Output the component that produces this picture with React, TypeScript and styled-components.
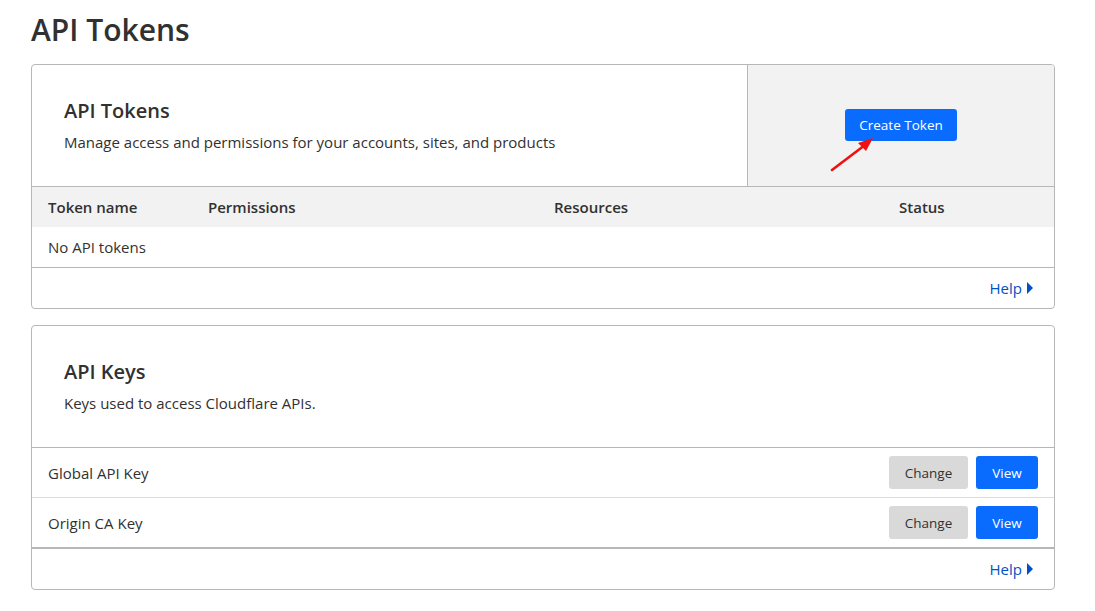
import styled, { createGlobalStyle } from "styled-components"

const GlobalStyle = createGlobalStyle`
  body {
    margin: 0;
    background: #ffffff;
    font-family: "Segoe UI", "Open Sans", "Noto Sans", sans-serif;
    color: #313131;
  }
`

function HelpLink() {
  return (
    <HelpAnchor href="#">
      Help
      <svg width="8" height="14" viewBox="0 0 8 14">
        <path d="M1 1 L7 7 L1 13 Z" fill="#0051c3" />
      </svg>
    </HelpAnchor>
  )
}

function App() {
  return (
    <Page>
      <GlobalStyle />
      <PageTitle>API Tokens</PageTitle>

      <Card>
        <CardTop>
          <Intro>
            <CardHeading>API Tokens</CardHeading>
            <CardText>Manage access and permissions for your accounts, sites, and products</CardText>
          </Intro>
          <ActionPane>
            <PrimaryButton $wide>Create Token</PrimaryButton>
            <Annotation width="50" height="42" viewBox="0 0 50 42">
              <line x1="3" y1="37" x2="36" y2="12" stroke="#f01010" strokeWidth="2.6" strokeLinecap="round" />
              <path d="M44 5 L29 10 L37 18 Z" fill="#f01010" />
            </Annotation>
          </ActionPane>
        </CardTop>
        <TableHead>
          <span>Token name</span>
          <span>Permissions</span>
          <span>Resources</span>
          <span>Status</span>
        </TableHead>
        <EmptyRow>No API tokens</EmptyRow>
        <CardFooter>
          <HelpLink />
        </CardFooter>
      </Card>

      <Card>
        <CardTop>
          <Intro>
            <CardHeading>API Keys</CardHeading>
            <CardText>Keys used to access Cloudflare APIs.</CardText>
          </Intro>
        </CardTop>
        <KeyRow>
          <span>Global API Key</span>
          <ButtonGroup>
            <SecondaryButton>Change</SecondaryButton>
            <PrimaryButton>View</PrimaryButton>
          </ButtonGroup>
        </KeyRow>
        <KeyRow $last>
          <span>Origin CA Key</span>
          <ButtonGroup>
            <SecondaryButton>Change</SecondaryButton>
            <PrimaryButton>View</PrimaryButton>
          </ButtonGroup>
        </KeyRow>
        <CardFooter>
          <HelpLink />
        </CardFooter>
      </Card>
    </Page>
  )
}

const Page = styled.main`
  width: 1024px;
  padding: 10px 0 20px 31px;
  display: flex;
  flex-direction: column;
  gap: 16px;
`

const PageTitle = styled.h1`
  font-size: 30px;
  font-weight: 600;
  line-height: 40px;
  margin: 0 0 -2px;
  color: #313131;
`

const Card = styled.section`
  border: 1px solid #b7b7b7;
  border-radius: 4px;
  overflow: hidden;
`

const CardTop = styled.div`
  display: flex;
  min-height: 121px;
  border-bottom: 1px solid #b7b7b7;
`

const Intro = styled.div`
  flex: 1;
  display: flex;
  flex-direction: column;
  justify-content: center;
  padding: 0 32px 2px;
`

const CardHeading = styled.h2`
  font-size: 20px;
  font-weight: 600;
  line-height: 28px;
  margin: 0 0 6px;
  color: #313131;
`

const CardText = styled.p`
  font-size: 15px;
  line-height: 22px;
  margin: 0;
  color: #313131;
`

const ActionPane = styled.div`
  position: relative;
  width: 307px;
  background: #f2f2f2;
  border-left: 1px solid #b7b7b7;
  display: flex;
  justify-content: center;
  padding-top: 44px;
  box-sizing: border-box;
`

const Annotation = styled.svg`
  position: absolute;
  left: 81px;
  top: 68px;
`

const PrimaryButton = styled.button<{ $wide?: boolean }>`
  ${({ $wide }) => ($wide ? "width: 112px; height: 32px;" : "width: 62px; height: 33px;")}
  padding: 0;
  background: #0a6cff;
  color: #ffffff;
  border: none;
  border-radius: 3px;
  font-family: inherit;
  font-size: 13.5px;
  white-space: nowrap;
  cursor: pointer;
`

const SecondaryButton = styled.button`
  width: 79px;
  height: 33px;
  padding: 0;
  background: #d9d9d9;
  color: #313131;
  border: none;
  border-radius: 3px;
  font-family: inherit;
  font-size: 13.5px;
  cursor: pointer;
`

const TableHead = styled.div`
  display: grid;
  grid-template-columns: 160px 346px 345px 1fr;
  align-items: center;
  height: 40px;
  padding: 0 16px;
  background: #f2f2f2;
  font-size: 15px;
  font-weight: 600;
`

const EmptyRow = styled.div`
  height: 40px;
  display: flex;
  align-items: center;
  padding: 0 16px;
  font-size: 15px;
  border-bottom: 1px solid #b7b7b7;
`

const KeyRow = styled.div<{ $last?: boolean }>`
  height: 49px;
  display: flex;
  align-items: center;
  justify-content: space-between;
  padding: 0 16px;
  font-size: 15px;
  border-bottom: ${({ $last }) => ($last ? "2px solid #b7b7b7" : "1px solid #dcdcdc")};
`

const ButtonGroup = styled.div`
  display: flex;
  gap: 8px;
`

const CardFooter = styled.div`
  height: 40px;
  display: flex;
  align-items: center;
  justify-content: flex-end;
  padding: 0 20px;
`

const HelpAnchor = styled.a`
  display: flex;
  align-items: center;
  gap: 4px;
  color: #0051c3;
  font-size: 15px;
  text-decoration: none;
`

export default App
